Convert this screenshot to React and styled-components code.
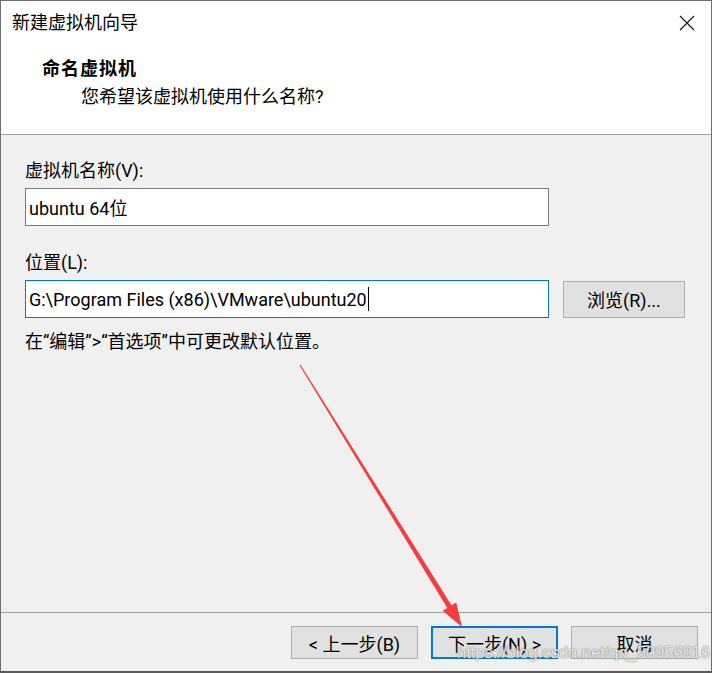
import React from "react";
import styled, { createGlobalStyle } from "styled-components";

const GlobalStyle = createGlobalStyle`
  html, body {
    margin: 0;
    padding: 0;
    background: #4a4a4a;
  }
  * {
    box-sizing: border-box;
  }
`;

const FONT = `Roboto, "Noto Sans CJK SC", sans-serif`;

const Wizard = () => {
  return (
    <>
      <GlobalStyle />
      <Window>
        <TopArea>
          <TitleBar>
            <TitleText>新建虚拟机向导</TitleText>
            <CloseButton aria-label="close">
              <svg width="16" height="16" viewBox="0 0 16 16">
                <path d="M1 1 L15 15 M15 1 L1 15" stroke="#111" strokeWidth="1.1" />
              </svg>
            </CloseButton>
          </TitleBar>
          <Header>
            <HeaderTitle>命名虚拟机</HeaderTitle>
            <HeaderSub>您希望该虚拟机使用什么名称?</HeaderSub>
          </Header>
        </TopArea>

        <Body>
          <Label>虚拟机名称(V):</Label>
          <InputRow>
            <TextBox>ubuntu 64位</TextBox>
          </InputRow>

          <Label $top={25}>位置(L):</Label>
          <InputRow>
            <TextBox $focused>
              G:\Program Files (x86)\VMware\ubuntu20
              <Caret />
            </TextBox>
            <BrowseButton>浏览(R)...</BrowseButton>
          </InputRow>

          <Hint>在“编辑”&gt;“首选项”中可更改默认位置。</Hint>
        </Body>

        <Footer>
          <Button>&lt; 上一步(B)</Button>
          <Button $primary>下一步(N) &gt;</Button>
          <Button>取消</Button>
        </Footer>

        <Arrow width="712" height="673" viewBox="0 0 712 673">
          <polygon
            points="299.5,365.3 300.5,364.7 451.5,605.3 456.2,602.4 462,627 442.6,610.8 447.3,607.9"
            fill="#f63c3c"
          />
        </Arrow>
        <Watermark>https://blog.csdn.net/qq_50956916</Watermark>
      </Window>
    </>
  );
};

const Window = styled.div`
  position: relative;
  width: 712px;
  height: 673px;
  display: flex;
  flex-direction: column;
  background: #f0f0f0;
  border: 1px solid #6f6f6f;
  border-bottom: 2px solid #5a5a5a;
  font-family: ${FONT};
  color: #000;
  overflow: hidden;
`;

const TopArea = styled.div`
  height: 134px;
  background: #fff;
  border-bottom: 1px solid #a0a0a0;
  display: flex;
  flex-direction: column;
`;

const TitleBar = styled.div`
  height: 45px;
  display: flex;
  align-items: center;
  justify-content: space-between;
  padding-left: 11px;
`;

const TitleText = styled.span`
  font-size: 18px;
  line-height: 24px;
  margin-top: -1px;
`;

const CloseButton = styled.div`
  width: 46px;
  height: 45px;
  display: flex;
  align-items: center;
  justify-content: center;
  margin-right: 1px;
  margin-top: -2px;
`;

const Header = styled.div`
  display: flex;
  flex-direction: column;
  padding-top: 11px;
`;

const HeaderTitle = styled.div`
  font-size: 18px;
  font-weight: 700;
  line-height: 24px;
  padding-left: 41px;
  letter-spacing: 1px;
`;

const HeaderSub = styled.div`
  font-size: 18px;
  line-height: 24px;
  padding-left: 80px;
  margin-top: 4px;
`;

const Body = styled.div`
  flex: 1;
  padding: 24px 0 0 24px;
  display: flex;
  flex-direction: column;
`;

const Label = styled.div`
  font-size: 18px;
  line-height: 24px;
  margin-top: ${(p) => p.$top || 0}px;
  margin-bottom: 5px;
`;

const InputRow = styled.div`
  display: flex;
  align-items: center;
  gap: 14px;
`;

const TextBox = styled.div`
  width: 524px;
  height: 38px;
  background: #fff;
  border: 1px solid ${(p) => (p.$focused ? "#0078d7" : "#7a7a7a")};
  display: flex;
  align-items: center;
  padding-left: 3px;
  font-size: 18px;
  white-space: pre;
`;

const Caret = styled.span`
  display: inline-block;
  width: 1px;
  height: 24px;
  background: #000;
  margin-left: 1px;
`;

const BrowseButton = styled.div`
  width: 122px;
  height: 37px;
  background: #e1e1e1;
  border: 1px solid #adadad;
  display: flex;
  align-items: center;
  justify-content: center;
  font-size: 18px;
`;

const Hint = styled.div`
  font-size: 18px;
  line-height: 24px;
  margin-top: 12px;
`;

const Footer = styled.div`
  height: 59px;
  border-top: 1px solid #a0a0a0;
  display: flex;
  justify-content: flex-end;
  align-items: flex-start;
  gap: 13px;
  padding: 13px 13px 0 0;
`;

const Button = styled.div`
  width: 127px;
  height: 33px;
  background: #e1e1e1;
  border: ${(p) => (p.$primary ? "2px solid #0078d7" : "1px solid #adadad")};
  display: flex;
  align-items: center;
  justify-content: center;
  font-size: 18px;
`;

const Arrow = styled.svg`
  position: absolute;
  left: -1px;
  top: -1px;
  pointer-events: none;
`;

const Watermark = styled.div`
  position: absolute;
  left: 456px;
  top: 642px;
  font-family: "Liberation Sans", Arial, sans-serif;
  font-size: 16.5px;
  color: rgba(255, 255, 255, 0.85);
  text-shadow: 0 0 1px rgba(90, 90, 90, 0.9), 0 0 2px rgba(140, 140, 140, 0.6);
  white-space: nowrap;
  pointer-events: none;
`;

export default Wizard;
